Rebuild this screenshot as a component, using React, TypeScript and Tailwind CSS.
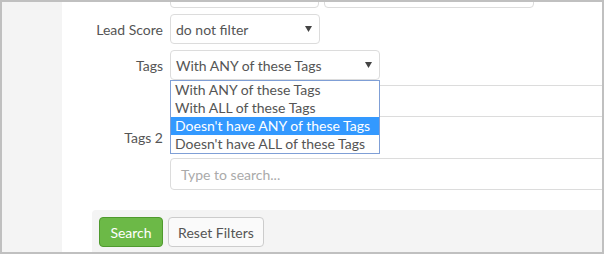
import React from 'react';

const font = { fontFamily: 'Lato, "Open Sans", sans-serif' };

function Caret() {
  return (
    <svg width="7" height="6" viewBox="0 0 7 6" className="shrink-0">
      <path d="M0 0 H7 L3.5 6 Z" fill="#444" />
    </svg>
  );
}

function Select({ value, width }: { value: string; width: string }) {
  return (
    <div
      className={`${width} h-[30px] flex items-center justify-between pl-[5px] pr-[7px] border border-[#dcdcdc] rounded-[4px] bg-white text-[14px] text-[#555]`}
    >
      <span>{value}</span>
      <Caret />
    </div>
  );
}

function Label({ children }: { children: React.ReactNode }) {
  return (
    <div className="w-[108px] shrink-0 pr-[7px] text-right text-[14px] text-[#555]">
      {children}
    </div>
  );
}

const options = [
  'With ANY of these Tags',
  'With ALL of these Tags',
  "Doesn't have ANY of these Tags",
  "Doesn't have ALL of these Tags",
];

export default function App() {
  return (
    <div
      className="w-[604px] h-[254px] border-2 border-[#c0c0c0] flex overflow-hidden bg-white"
      style={font}
    >
      {/* left rail */}
      <div className="w-[60px] shrink-0 bg-[#f4f4f4]" />

      {/* form */}
      <div className="flex-1 relative overflow-hidden">
        <div className="flex flex-col gap-[6px] -mt-[25px]">
          {/* previous row, cut off */}
          <div className="flex items-center">
            <Label>&nbsp;</Label>
            <div className="flex gap-[5px]">
              <div className="w-[149px] h-[31px] border border-[#dcdcdc] rounded-[4px]" />
              <div className="w-[210px] h-[31px] border border-[#dcdcdc] rounded-[4px]" />
            </div>
          </div>

          <div className="flex items-center">
            <Label>Lead Score</Label>
            <Select value="do not filter" width="w-[150px]" />
          </div>

          <div className="flex items-start">
            <div className="h-[30px] flex items-center">
              <Label>Tags</Label>
            </div>
            <div className="relative flex flex-col gap-[5px]">
              <Select value="With ANY of these Tags" width="w-[210px]" />
              <div className="w-[500px] h-[32px] border border-[#dcdcdc] rounded-[4px]" />

              {/* open dropdown */}
              <div className="absolute left-0 top-[30px] z-10 w-[210px] border border-[#7f9fd6] bg-white text-[14px] text-[#555] leading-[18px]">
                {options.map((o, i) => (
                  <div
                    key={o}
                    className={`pl-[4px] ${i === 2 ? 'bg-[#3399ff] text-white' : ''}`}
                  >
                    {o}
                  </div>
                ))}
              </div>
            </div>
          </div>

          <div className="flex items-start -mt-[1px]">
            <div className="h-[30px] flex items-center">
              <Label>Tags 2</Label>
            </div>
            <div className="flex flex-col gap-[6px]">
              {/* select hidden under the open list */}
              <div className="w-[210px] h-[30px] border border-[#dcdcdc] rounded-[4px]" />
              <div className="w-[500px] h-[32px] flex items-center pl-[10px] border border-[#dcdcdc] rounded-[4px] text-[14px] text-[#aaa]">
                Type to search...
              </div>
            </div>
          </div>

          {/* actions */}
          <div className="ml-[30px] mt-[14px] h-[60px] bg-[#f4f4f4] rounded-tl-[4px] flex gap-[5px] pl-[7px] pt-[7px]">
            <button className="w-[64px] h-[30px] rounded-[4px] bg-[#6cb947] border border-[#4f9a2e] text-white text-[14px]">
              Search
            </button>
            <button className="w-[96px] h-[30px] rounded-[4px] bg-[#fafafa] border border-[#cccccc] text-[#555] text-[14px]">
              Reset Filters
            </button>
          </div>
        </div>
      </div>
    </div>
  );
}
